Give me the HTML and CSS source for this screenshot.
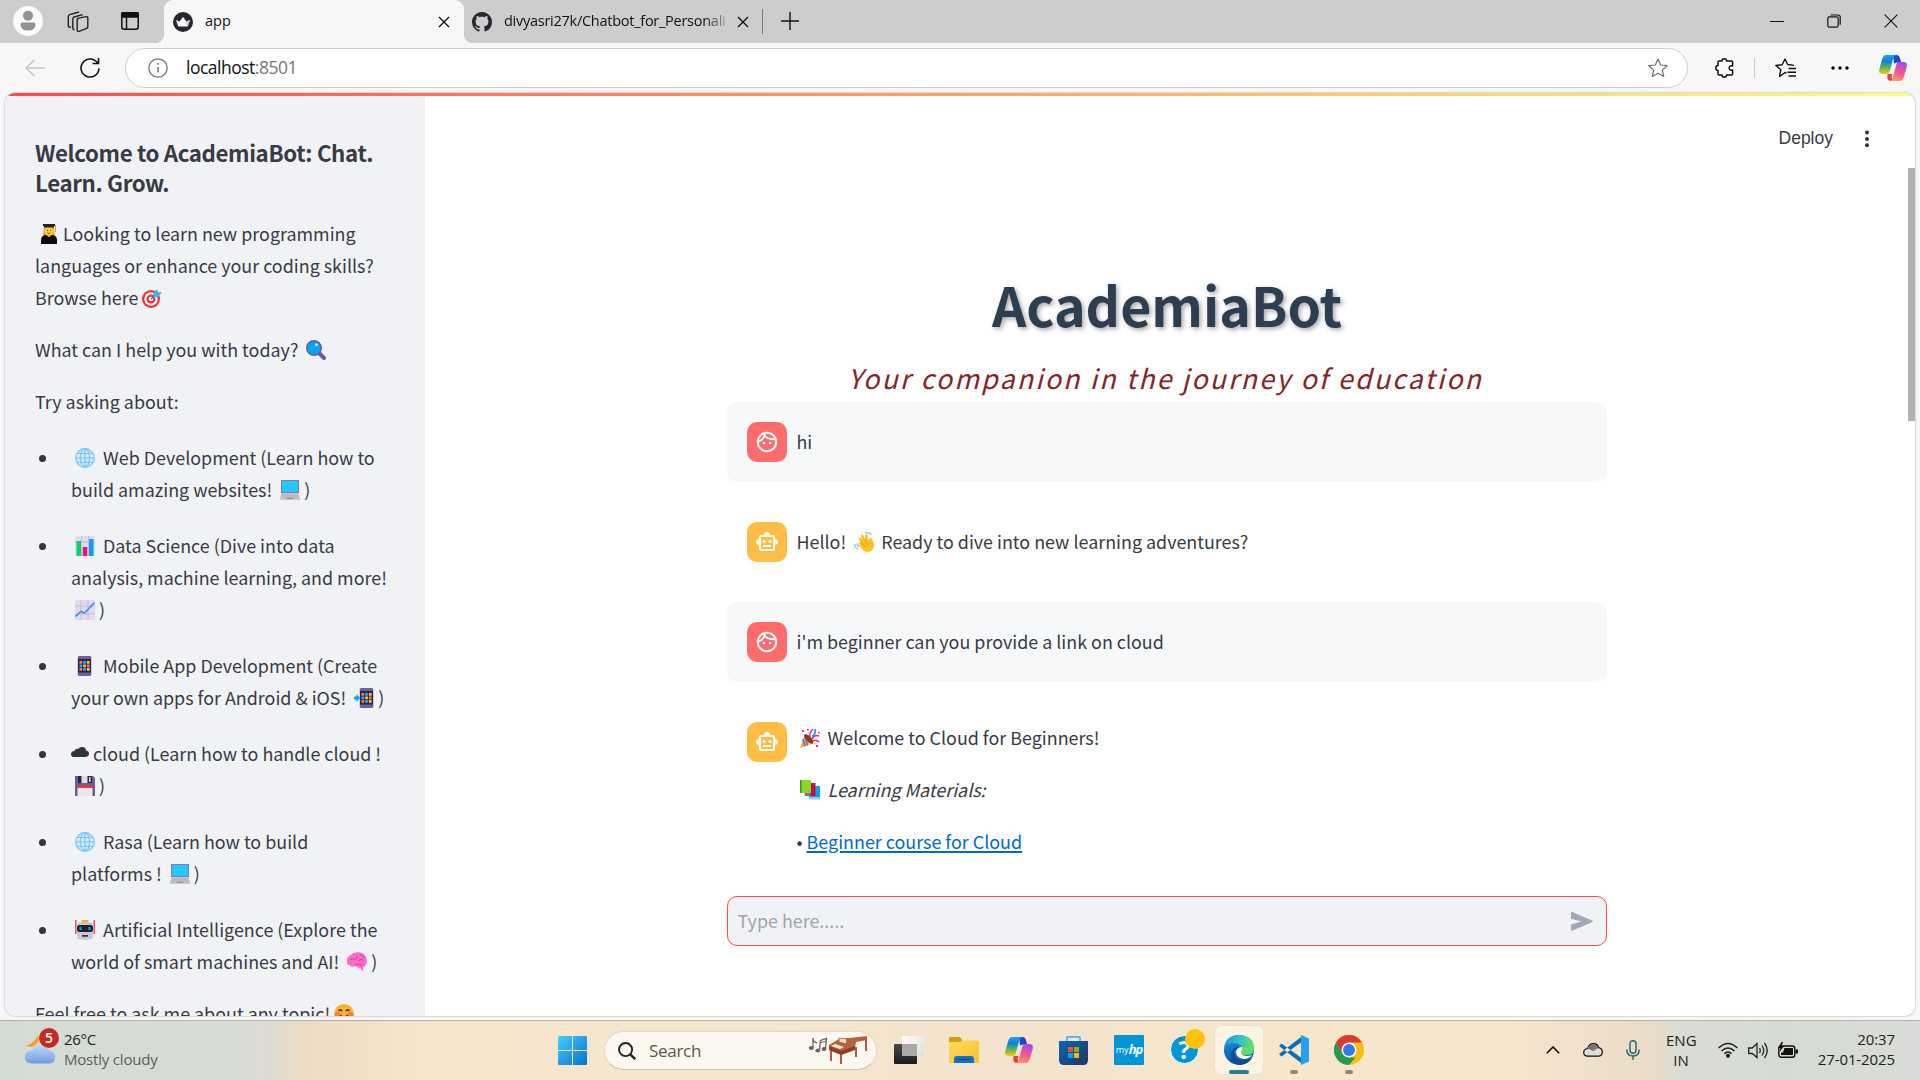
FILE: index.html
```html
<!DOCTYPE html>
<html lang="en">
<head>
<meta charset="utf-8">
<title>app</title>
<link rel="stylesheet" href="styles.css">
</head>
<body>
<svg class="defs" width="0" height="0">
  <defs>
    <linearGradient id="cpA" x1="0" y1="0" x2="0" y2="1"><stop offset="0" stop-color="#1ba5ee"/><stop offset=".35" stop-color="#0f7fd8"/><stop offset=".62" stop-color="#4fb35e"/><stop offset="1" stop-color="#fcc60e"/></linearGradient>
    <linearGradient id="cpB" x1="0.6" y1="0" x2="0.3" y2="1"><stop offset="0" stop-color="#a549ee"/><stop offset=".5" stop-color="#f0568f"/><stop offset="1" stop-color="#fb9d62"/></linearGradient>
    <linearGradient id="win" x1="0" y1="0" x2="1" y2="1"><stop offset="0" stop-color="#48cdfb"/><stop offset="1" stop-color="#0670d0"/></linearGradient>
    <linearGradient id="fold" x1="0" y1="0" x2="1" y2="1"><stop offset="0" stop-color="#ffda5c"/><stop offset="1" stop-color="#fdbf2d"/></linearGradient>
    <linearGradient id="store" x1="0" y1="0" x2="1" y2="1"><stop offset="0" stop-color="#0667b5"/><stop offset="1" stop-color="#24355f"/></linearGradient>
    <linearGradient id="edgeT" x1="0" y1=".4" x2="1" y2=".5"><stop offset="0" stop-color="#1a96d8"/><stop offset=".5" stop-color="#31c2cf"/><stop offset="1" stop-color="#67e34f"/></linearGradient>
    <linearGradient id="edgeB" x1="0" y1="0" x2="0" y2="1"><stop offset="0" stop-color="#1791dc"/><stop offset="1" stop-color="#0c59a4"/></linearGradient>
    <linearGradient id="cloudG" x1="0" y1="0" x2="0" y2="1"><stop offset="0" stop-color="#c4dcfb"/><stop offset="1" stop-color="#6f9be6"/></linearGradient>
    <linearGradient id="tvD" x1="0" y1="0" x2="0" y2="1"><stop offset="0" stop-color="#4a4a4a"/><stop offset="1" stop-color="#1a1a1a"/></linearGradient>
    <linearGradient id="tvL" x1="0" y1="0" x2="1" y2="1"><stop offset="0" stop-color="#fff"/><stop offset="1" stop-color="#dcdcdc"/></linearGradient>
  </defs>
  <symbol id="copilot" viewBox="0 0 28 26">
    <path d="M14 0h3.500q2.500 0 3.400 3l1.300 4.500h-4l-3.200 1z" fill="#1c48cc"/>
    <path d="M8.500 19h5l-1 3q1 4 3.500 4h-4q-3 0-3.700-3z" fill="#e5403a"/>
    <path d="M7.500 0H17q-2 .5-2.900 4L10.500 17q-.8 2-2.800 2H3.500Q-.7 19 .3 14L3.200 4Q4.300 0 7.500 0z" fill="url(#cpA)"/>
    <path d="M20.500 26H11q2-.5 2.900-4L17.500 9q.8-2 2.800-2h4.200q4.200 0 3.200 5l-2.900 10q-1.100 4-4.300 4z" fill="url(#cpB)"/>
  </symbol>
  <symbol id="globe" viewBox="0 0 20 20"><circle cx="10" cy="10" r="9.500" fill="#d3eaff"/><g fill="none" stroke="#79c4fb" stroke-width="1.200"><circle cx="10" cy="10" r="9.300"/><ellipse cx="10" cy="10" rx="4.600" ry="9.300"/><path d="M10 .7v18.600M.7 10h18.600M2.200 5.500h15.600M2.200 14.500h15.600"/></g></symbol>
  <symbol id="laptop" viewBox="0 0 20 20"><path d="M1 0h18v13H1z" fill="#7f7ab6"/><path d="M2 1h16v11H2z" fill="#26c6ff"/><path d="M1.500 13h17l1.500 5v2H0v-2z" fill="#c9c9ca"/><path d="M2 15h16M1.500 17h17" stroke="#aaa" stroke-width=".8"/><path d="M6.500 17.800h7v1h-7z" fill="#888"/></symbol>
  <symbol id="apps" viewBox="0 0 14 20"><rect width="14" height="20" rx="1.800" fill="#6d5ea0"/><path d="M.5 3h13v13.500H.5z" fill="#35204c"/><path d="M2 5h2.700v2.700H2zM9.400 8.500h2.700v2.700H9.400zM2 12h2.700v2.700H2z" fill="#ff822d"/><path d="M5.700 5h2.700v2.700H5.700zM2 8.500h2.700v2.700H2zM5.700 12h2.700v2.700H5.700z" fill="#1aaef5"/><path d="M9.400 5h2.700v2.700H9.400zM5.700 8.500h2.700v2.700H5.700zM9.400 12h2.700v2.700H9.400z" fill="#fcc93a"/></symbol>
  <symbol id="face-user" viewBox="0 0 24 24"><circle cx="12" cy="12" r="9.300" fill="none" stroke="#fff" stroke-width="2"/><path d="M3.200 11.800C6.200 10.700 8.600 8.600 9.700 5.200M8.700 3.800c1.900 3.800 5.600 6.100 12 5.200" fill="none" stroke="#fff" stroke-width="1.900"/><circle cx="9" cy="13" r="1.300" fill="#fff"/><circle cx="15" cy="13" r="1.300" fill="#fff"/></symbol>
  <symbol id="bot" viewBox="0 0 24 24"><path fill="#fff" d="M20 9V7c0-1.100-.9-2-2-2h-3c0-1.660-1.340-3-3-3S9 3.340 9 5H6c-1.100 0-2 .9-2 2v2c-1.660 0-3 1.340-3 3s1.340 3 3 3v4c0 1.100.9 2 2 2h12c1.100 0 2-.9 2-2v-4c1.660 0 3-1.340 3-3s-1.340-3-3-3zm-2 10H6V7h12v12zm-9-6a1.500 1.500 0 1 1 0-3 1.500 1.500 0 0 1 0 3zm7.500-1.500a1.500 1.500 0 1 1-3 0 1.500 1.500 0 0 1 3 0zM8 15h8v2H8v-2z"/></symbol>
</svg>

<header class="tabstrip">
  <svg class="profile" viewBox="0 0 30 30"><circle cx="15" cy="15" r="15" fill="#fbfbfb"/><circle cx="15" cy="9.800" r="5" fill="#919191"/><path d="M7.500 18.500q0-2 2-2h11q2 0 2 2 0 6-7.500 6t-7.500-6z" fill="#919191"/></svg>
  <svg class="workspaces" viewBox="0 0 22 22" fill="none" stroke="#222" stroke-width="1.400"><path d="M9.800 7.600l9-2q2-.2 2 1.600v8.600q0 1.200-1.200 1.600l-7.600 2.900q-1.800.5-1.800-1.300V9.100q0-1.200 1-1.400z"/><path d="M7.500 18.500q-1.700.5-1.700-1.300V8q0-1.500 1.300-2l8.600-2.400"/><path d="M4 16q-2.700.6-2.700-1.200V5.700q0-1.500 1.300-2L12 1"/></svg>
  <svg class="tabmenu" viewBox="0 0 18 18" fill="none" stroke="#111" stroke-width="1.500"><rect x=".8" y=".8" width="16.400" height="16.400" rx="2.500"/><path d="M1 1h16v4H1z" fill="#111"/><path d="M5.500 5v12"/></svg>
  <div class="tab tab-active">
    <svg class="favicon" viewBox="0 0 20 20"><circle cx="10" cy="10" r="10" fill="#262730"/><path d="M3 8l3.500 1.500L10 5l3.500 4.500L17 8l-2.300 6.500H5.300z" fill="#fff"/><path d="M10 5l3.500 4.500L17 8l-2.300 6.500z" fill="#ccc"/></svg>
    <span class="tab-title">app</span>
    <svg class="x" viewBox="0 0 12 12"><path d="M1 1l10 10M11 1L1 11" stroke="#111" stroke-width="1.400"/></svg>
  </div>
  <div class="tab tab-idle">
    <svg class="favicon" viewBox="0 0 16 16"><path fill="#24292f" d="M8 0C3.580 0 0 3.580 0 8c0 3.540 2.290 6.530 5.470 7.590.4.070.55-.17.55-.38 0-.19-.010-.82-.010-1.490-2.010.37-2.530-.49-2.690-.94-.09-.23-.48-.94-.82-1.130-.28-.15-.68-.52-.010-.53.63-.010 1.080.58 1.230.82.72 1.210 1.870.87 2.330.66.070-.52.28-.87.51-1.070-1.780-.2-3.640-.89-3.640-3.950 0-.87.31-1.590.82-2.150-.08-.2-.36-1.020.08-2.120 0 0 .67-.21 2.200.82.64-.18 1.320-.27 2-.27s1.360.09 2 .27c1.530-1.040 2.200-.82 2.200-.82.44 1.100.16 1.920.08 2.120.51.56.82 1.270.82 2.150 0 3.070-1.870 3.750-3.650 3.950.29.25.54.73.54 1.480 0 1.070-.010 1.930-.010 2.200 0 .21.15.46.55.38A8.010 8.010 0 0 0 16 8c0-4.420-3.580-8-8-8z"/></svg>
    <span class="tab-title fade">divyasri27k/Chatbot_for_Personali</span>
    <svg class="x" viewBox="0 0 12 12"><path d="M1 1l10 10M11 1L1 11" stroke="#111" stroke-width="1.400"/></svg>
  </div>
  <i class="tab-sep"></i>
  <svg class="newtab" viewBox="0 0 18 18"><path d="M9 0v18M0 9h18" stroke="#111" stroke-width="1.400"/></svg>
  <div class="wincontrols">
    <svg viewBox="0 0 14 14"><path d="M0 7.500h14" stroke="#111"/></svg>
    <svg viewBox="0 0 14 14" fill="none" stroke="#111" stroke-width="1.200"><rect x=".8" y="2.800" width="10.400" height="10.400" rx="1.800"/><path d="M3.500 1h7.500q2.200 0 2.200 2.200v7.500"/></svg>
    <svg viewBox="0 0 14 14"><path d="M.7.7l12.600 12.600M13.300.7L.7 13.300" stroke="#111" stroke-width="1.100"/></svg>
  </div>
</header>

<div class="toolbar">
  <svg class="back" viewBox="0 0 20 18" fill="none" stroke="#c6c6c6" stroke-width="1.500"><path d="M20 9H1M9.500 1L1 9l8.500 8"/></svg>
  <svg class="reload" viewBox="0 0 20 20" fill="none" stroke="#111" stroke-width="1.600"><path d="M17.500 5A9 9 0 1 0 19 10.500M18.500 0v5.500H12.500"/></svg>
  <div class="urlbar">
    <svg class="info" viewBox="0 0 20 20" fill="none" stroke="#757575" stroke-width="1.300"><circle cx="10" cy="10" r="9.200"/><path d="M10 9v5.500M10 5v1.800" stroke-width="1.500"/></svg>
    <span class="url">localhost<span class="port">:8501</span></span>
    <svg class="star" viewBox="0 0 20 20" fill="none" stroke="#707070" stroke-width="1.200" stroke-linejoin="round"><path d="M10 1l2.700 6 6.500.7-4.900 4.400 1.400 6.400L10 15.200l-5.700 3.300 1.400-6.400L.8 7.700 7.300 7z"/></svg>
  </div>
  <svg class="puzzle" viewBox="0 0 19 20" fill="none" stroke="#111" stroke-width="1.500" stroke-linejoin="round"><path d="M7 3q0-2.200 2.300-2.200T11.600 3h5q1 0 1 1v4q-3.400-.7-3.400 2t3.400 2v4q0 1-1 1h-5q0 2.200-2.300 2.200T7 17H4q-1 0-1-1v-3.600Q.8 12.300.8 10T3 7.600V4q0-1 1-1z"/></svg>
  <i class="bar-sep"></i>
  <svg class="favs" viewBox="0 0 21 20" fill="none" stroke="#111" stroke-width="1.400" stroke-linejoin="round"><path d="M11.500 15l-1.500-.5-5.500 4 1.300-6.800L.8 7.500l6.300-.8L10 1l2.700 5.500 6.300.9M13.500 10.500H21M12.500 14.300H21M13.500 18H21"/></svg>
  <svg class="more" viewBox="0 0 18 4"><circle cx="2" cy="2" r="1.700"/><circle cx="9" cy="2" r="1.700"/><circle cx="16" cy="2" r="1.700"/></svg>
  <svg class="cp"><use href="#copilot"/></svg>
</div>

<main class="page">
  <div class="decoration"></div>
  <div class="app">
    <aside class="sidebar">
      <h3>Welcome to AcademiaBot: Chat.<br>Learn. Grow.</h3>
      <p><svg class="emoji" viewBox="0 0 20 20"><path d="M5 3h10l.7 9H4.300z" fill="#e59b1c"/><circle cx="10" cy="7" r="4.500" fill="#ffc93c"/><path d="M2 20v-4q0-4.500 5-5l3 2 3-2q5 .5 5 5v4z" fill="#0b0b0b"/><path d="M4 0h12v2H4zM5 2h10v1.500H5z" fill="#222"/><path d="M8 6.500h1M11 6.500h1" stroke="#6b4410" stroke-width="1.200"/><path d="M8.500 9q1.500 1 3 0" stroke="#b5432b" fill="none"/><path d="M16.500 1v7" stroke="#e0a32f"/></svg>Looking to learn new programming<br>languages or enhance your coding skills?<br>Browse here<svg class="emoji" viewBox="0 0 20 20"><circle cx="9" cy="11" r="9" fill="#f8312f"/><circle cx="9" cy="11" r="6.700" fill="#fff"/><circle cx="9" cy="11" r="4.500" fill="#f8312f"/><circle cx="9" cy="11" r="2.300" fill="#fff"/><path d="M9 11l6-6" stroke="#187fc4" stroke-width="1.300"/><path d="M11 6l4-5 1 3 4 .5-4 4.500-4 .5z" fill="#38b8f8"/></svg></p>
      <p>What can I help you with today? <svg class="emoji" viewBox="0 0 20 20"><path d="M13 13l5 5" stroke="#6c5b9e" stroke-width="4" stroke-linecap="round"/><circle cx="8" cy="8" r="7.300" fill="#00a6ed" stroke="#6c5b9e" stroke-width="1.400"/><circle cx="10.500" cy="4.700" r="1.300" fill="#fff"/></svg></p>
      <p>Try asking about:</p>
      <ul>
        <li><span><svg class="emoji"><use href="#globe"/></svg> Web Development (Learn how to<br>build amazing websites! <svg class="emoji"><use href="#laptop"/></svg>)</span></li>
        <li><span><svg class="emoji" viewBox="0 0 20 20"><rect width="20" height="20" rx="2" fill="#e5d9ef"/><path d="M6.500 0v20M13.500 0v20M0 6h20M0 13h20" stroke="#c9bbd4"/><path d="M1.500 5H6v15H1.500z" fill="#00d26a"/><path d="M7.800 11h4.500v9H7.800z" fill="#f70a8d"/><path d="M14 3h4.500v17H14z" fill="#00a6ed"/></svg> Data Science (Dive into data<br>analysis, machine learning, and more!<br><svg class="emoji" viewBox="0 0 20 20"><rect width="20" height="20" rx="2" fill="#e5d9ef"/><path d="M6 0v20M13 0v20M0 6h20M0 14h20" stroke="#c9bbd4"/><path d="M.5 16.500L6 11.500l3.500 1.500L19.500 2.500" fill="none" stroke="#2f9cf0" stroke-width="1.600"/></svg>)</span></li>
        <li><span><svg class="emoji" viewBox="0 0 20 20"><use href="#apps" x="2.500" width="14" height="20"/></svg> Mobile App Development (Create<br>your own apps for Android &amp; iOS! <svg class="emoji" viewBox="0 0 20 20"><use href="#apps" x="5.500" width="14" height="20"/><path d="M0 8.500h2.500V6L6 10l-3.500 4v-2.500H0z" fill="#00a6ed"/></svg>)</span></li>
        <li><span><svg class="cloudglyph" viewBox="0 0 18 10"><path d="M3.500 10Q0 10 0 7.200T3.500 4Q4.500 1.300 7 2q1.500-2 4-2 4 0 4 3.500 3 .5 3 3.300T14.500 10z" fill="#31333f"/></svg>cloud (Learn how to handle cloud !<br><svg class="emoji" viewBox="0 0 20 20"><path d="M0 0h18l2 2v18H0z" fill="#6b5b9b"/><path d="M3 0h14v7H3z" fill="#32204c"/><path d="M6.500 0h6v7h-6z" fill="#ddd"/><path d="M14 1h1.500v5H14z" fill="#ddd"/><path d="M2.500 11h15v9h-15z" fill="#e8e8e8"/><path d="M2.500 9.500h15V12h-15z" fill="#f8312f"/></svg>)</span></li>
        <li><span><svg class="emoji"><use href="#globe"/></svg> Rasa (Learn how to build<br>platforms ! <svg class="emoji"><use href="#laptop"/></svg>)</span></li>
        <li><span><svg class="emoji" viewBox="0 0 20 20"><path d="M.8 0v14M19.200 0v14" stroke="#f0504e" stroke-width="1.500"/><path d="M6.500 0h7v4h-7z" fill="#fdb02e"/><path d="M3 2.500h14l1.500 5L17.500 19q-7.500 1.500-15 0L1.500 7.500z" fill="#cdc4d6"/><rect x="2" y="5" width="16" height="7" rx="2.500" fill="#20222b"/><path d="M5.500 7v3M14.500 7v3" stroke="#00a6ed" stroke-width="2.200"/><path d="M7 15h6v1.800H7z" fill="#333"/></svg> Artificial Intelligence (Explore the<br>world of smart machines and AI! <svg class="emoji" viewBox="0 0 20 20"><path d="M0 10Q-1 6 3 3.500 7-.5 12 .3q5 .7 7 5 2 4-.5 8.200L16 15.500V20l-2.500-4q-3 .5-4.500-2-5 2-6.500-1Q0 13 0 10z" fill="#ff6dc6"/><path d="M3 8q3-3 5 0M9 3.500q2 2 0 4M11 9q3-3 6-.5M8 13q4-2 7 1M13 3q3 0 4 3" fill="none" stroke="#e8359f"/></svg>)</span></li>
      </ul>
      <p>Feel free to ask me about any topic!<svg class="emoji" viewBox="0 0 20 20"><circle cx="10" cy="10" r="10" fill="#ffb02e"/><path d="M4.500 7q1.700-2.500 3.500 0M12 7q1.700-2.500 3.500 0M6 11q4 4 8 0" fill="none" stroke="#402a32" stroke-width="1.400"/><circle cx="3.500" cy="10.500" r="2.500" fill="#ff7a3c"/><circle cx="16.500" cy="10.500" r="2.500" fill="#ff7a3c"/></svg></p>
    </aside>
    <section class="main">
      <div class="apphead">
        <span>Deploy</span>
        <svg class="kebab" viewBox="0 0 4 18"><circle cx="2" cy="2.500" r="2"/><circle cx="2" cy="8.900" r="2"/><circle cx="2" cy="15.200" r="2"/></svg>
      </div>
      <div class="column">
        <h1>AcademiaBot</h1>
        <div class="subtitle">Your companion in the journey of education</div>
        <div class="msg user"><div class="avatar"><svg><use href="#face-user"/></svg></div><div class="body"><p>hi</p></div></div>
        <div class="msg"><div class="avatar"><svg><use href="#bot"/></svg></div><div class="body"><p>Hello! <svg class="emoji" viewBox="0 0 20 20"><path d="M6 9L4.500 6.500Q6 5 7 6.500L8 8 7 3.500q1.200-1.500 2.300 0L11 7l.5-4.500q1.500-1 2 .5L14 8l2-2q2-.5 2 1l2 5q0 7-6 8-4 0-6-3l-3.500-5Q5 10 6 11z" fill="#ffc020"/><path d="M8 11l3 4M10.500 8l3 5" stroke="#e59a16" fill="none"/><path d="M1 12q-1 4 3 5M3 11.500q-.5 3 2.500 3M11 1q2-1.500 4 1M15 .5q2 .5 2 2.500" fill="none" stroke="#6aa6ee"/></svg> Ready to dive into new learning adventures?</p></div></div>
        <div class="msg user"><div class="avatar"><svg><use href="#face-user"/></svg></div><div class="body"><p>i'm beginner can you provide a link on cloud</p></div></div>
        <div class="msg long"><div class="avatar"><svg><use href="#bot"/></svg></div><div class="body">
          <p><svg class="emoji" viewBox="0 0 20 20"><path d="M4.500 6.500l8 9L0 20z" fill="#fcb02d"/><path d="M4.500 6.500l3 11M3 11l2 7.300" stroke="#5b6cd8" stroke-width="1.500"/><ellipse cx="9" cy="11" rx="2.500" ry="6" transform="rotate(-42 9 11)" fill="#7b3f1c"/><path d="M10 9q-1-4 3-8M12 11q2-5 7-3M13 13q3-2 6 1" fill="none" stroke="#f0259a" stroke-width="1.500"/><path d="M12 8q4-1 3-7" fill="none" stroke="#00a6ed" stroke-width="1.700"/><path d="M2 2h2v2H2zM16 17h2v2h-2zM7 1h1.500v1.500H7zM18 4h1.500v1.500H18z" fill="#f0259a"/><path d="M8 4h1.500v1.500H8zM14 15h1.500v1.500H14z" fill="#fcc23c"/></svg> Welcome to Cloud for Beginners!</p>
          <p><svg class="emoji" viewBox="0 0 20 20"><path d="M9 6h11v13H9z" fill="#00a6ed"/><path d="M9 17h11v2.500H9z" fill="#9bc8e8"/><path d="M5 3h10.500v13H5z" fill="#ca0b4a"/><path d="M4.500 13h6v3h-6z" fill="#9a6b82"/><path d="M0 0h11v13H0z" fill="#86d72f"/><path d="M0 0h1.500v13H0z" fill="#44911b"/></svg> <em>Learning Materials:</em></p>
          <p>• <a>Beginner course for Cloud</a></p>
        </div></div>
        <div class="chatinput"><span>Type here.....</span><svg viewBox="0 0 22 19"><path d="M1.200.1L21.500 8.700q.9.600 0 1.300L1.200 18.800Q0 19 0 18v-5.600l10.500-2.900L0 6.800V1Q.1 0 1.200.1z" fill="#a3a8b8"/></svg></div>
      </div>
      <div class="scrollthumb"></div>
    </section>
  </div>
</main>

<footer class="taskbar">
  <div class="weather">
    <svg viewBox="0 0 34 37"><path d="M13 8q3 8-6 12l-7-1q9-2 13-11z" fill="#f6a01f"/><path d="M7 36.500Q0 36.500 0 30t7-6.500Q10 17.500 16 17.500t8 6q6 .5 6 6.500t-6 6.500z" fill="url(#cloudG)"/><circle cx="24" cy="11" r="10" fill="#c42b1c"/></svg>
    <b class="badge">5</b>
    <div class="forecast"><div class="temp">26°C</div><div class="cond">Mostly cloudy</div></div>
  </div>
  <svg class="start" viewBox="0 0 29 29"><path d="M0 1q0-1 1-1h13v14H0zM15 0h13q1 0 1 1v13H15zM0 15h14v14H1q-1 0-1-1zM15 15h14v13q0 1-1 1H15z" fill="url(#win)"/></svg>
  <div class="search">
    <svg class="mag" viewBox="0 0 19 19" fill="none" stroke="#222" stroke-width="2"><circle cx="8" cy="8" r="6.900"/><path d="M13 13l5.200 5.200" stroke-width="2.500"/></svg>
    <span>Search</span>
    <svg class="piano" viewBox="0 0 58 29"><g fill="#666" stroke="#666"><path d="M4 12V2q0 4 4 5M10.500 13.500l1-9 6-2-1 10" fill="none" stroke-width="1.300"/><path d="M11 7l6-2" fill="none"/><ellipse cx="2.300" cy="12" rx="2" ry="1.500"/><ellipse cx="8.800" cy="14.500" rx="2" ry="1.500"/><ellipse cx="15" cy="13" rx="2" ry="1.500"/></g><path d="M22 12v13M32 17v11M47 11v10M57 3v12" stroke="#9b4e36" stroke-width="1.800"/><path d="M20 9L30 3l10-1 18-2v4l-11 2-1 6-14 5.500-12-4z" fill="#b86142"/><path d="M20 10l12 5 14-5v4l-14 5-12-5z" fill="#8b3e2a"/><path d="M22 10l4-2 9 3-4 2z" fill="#f7ead8"/><path d="M30 2l8 1-1 5-7-2z" fill="#f6e2b8" stroke="#875129" stroke-width=".7"/></svg>
  </div>
  <svg class="taskview" viewBox="0 0 30 28"><rect y="8" width="23" height="20" rx="1" fill="url(#tvD)"/><rect x="8" width="22" height="20" rx="1" fill="url(#tvL)" opacity=".95"/><path d="M8 8h15v12H8z" fill="#a9a9a9"/></svg>
  <svg class="explorer" viewBox="0 0 30 26"><path d="M0 1q0-1 1-1h9q1.500 0 2.500 2l1 2L11 6H0z" fill="#dd9c09"/><path d="M0 5h11l2-1.500h16q1 0 1 1V25q0 1-1 1H1q-1 0-1-1z" fill="url(#fold)"/><path d="M5 26v-4q0-3 3-3h14q3 0 3 3v4z" fill="#0c73cb"/><path d="M8.500 22.500h13" stroke="#084c8d" stroke-width="1.200"/></svg>
  <svg class="copilot"><use href="#copilot"/></svg>
  <svg class="store" viewBox="0 0 29 29"><path d="M8 6V2q0-1.200 1-1.200h11q1 0 1 1.200v4" fill="none" stroke="#30bdf3" stroke-width="1.700"/><path d="M0 5h29v19q0 5-5 5H5q-5 0-5-5z" fill="url(#store)"/><path d="M9 11h5v5H9z" fill="#f25022"/><path d="M15 11h5v5h-5z" fill="#7fba00"/><path d="M9 17h5v5H9z" fill="#00a4ef"/><path d="M15 17h5v5h-5z" fill="#ffb900"/></svg>
  <div class="myhp"><span>my</span><b>hp</b></div>
  <div class="help">?<i></i></div>
  <div class="edge"><svg viewBox="0 0 30 30"><circle cx="15" cy="15" r="15" fill="url(#edgeB)"/><path d="M0 14Q1 0 15 0q15 1 15 13 0 7-7 7-6 0-6-3 2-2 1-4-1-5-9-5-6 0-9 6z" fill="url(#edgeT)"/><path d="M10 16q0 9 10 9 5 0 8-2-4 7-13 7-8-1-8-9 0-7 6-9 4 0 5 2-7-1-8 2z" fill="#104a96"/><path d="M18 12q2 3-1 5 1 4 6 4 3 0 5-1-3 4-8 4-8-1-8-7 1-5 6-5z" fill="#fcf3e4"/><path d="M30 13q0 7-7 7-6 0-6-3 2-2 1-4z" fill="#5edc68"/></svg><i></i></div>
  <div class="code"><svg viewBox="0 0 30 30"><path d="M0 11l2.500-2.500L24 24v5.500zM0 19l2.500 2.500L24 6V.5z" fill="#0a6fb8"/><path d="M22 0l8 3.500v23L22 30z" fill="#26a0ee"/></svg><i></i></div>
  <div class="chrome"><svg viewBox="0 0 30 30"><circle cx="15" cy="15" r="15" fill="#fbbc12"/><path d="M2 7.500A15 15 0 0 1 28 7.500H15L8.500 19z" fill="#db3a2e"/><path d="M2 7.500L8.500 18.700 15 22.500h6.500L15 30A15 15 0 0 1 2 7.500z" fill="#249a4a"/><circle cx="15" cy="15" r="7.500" fill="#fff"/><circle cx="15" cy="15" r="6" fill="#3478ee"/></svg><i></i></div>
  <div class="tray">
    <svg class="chev" viewBox="0 0 14 8" fill="none" stroke="#111" stroke-width="1.600"><path d="M.8 7.300L7 1l6.200 6.300"/></svg>
    <svg class="onedrive" viewBox="0 0 20 14"><path d="M4.500 13.200Q.7 13 .7 9.500t4-4Q6 .7 10.500.7q4 0 5.300 4Q19.300 5.500 19.300 9t-3.500 4.200z" fill="#ddd" stroke="#111" stroke-width="1.200"/><path d="M4.700 5.500Q6.500 1.200 10.500 1.200T15.500 5L10 8z" fill="#777"/></svg>
    <svg class="mic" viewBox="0 0 14 20" fill="none" stroke="#2b6473" stroke-width="1.400"><rect x="4" y=".7" width="6" height="12.500" rx="3"/><path d="M.8 9.500q0 6.500 6.200 6.500t6.200-6.500M7 16v4"/></svg>
    <div class="lang">ENG<br>IN</div>
    <svg class="wifi" viewBox="0 0 20 16" fill="none" stroke="#222" stroke-width="1.500"><path d="M.6 6q9.400-9 18.800 0M3.500 9q6.500-6 13 0M6.300 11.800q3.700-3.300 7.400 0"/><circle cx="10" cy="13.800" r="1.300" fill="#222"/></svg>
    <svg class="vol" viewBox="0 0 20 17" fill="none" stroke="#222" stroke-width="1.300"><path d="M.7 6v5.500h3.500L9 15.500v-14L4.200 6zM11.500 6q1.500 2.500 0 5M14 3.500q3.500 5 0 10M16.500 1q5.500 7.500 0 15"/></svg>
    <svg class="bat" viewBox="0 0 20 16"><rect x=".8" y="4" width="16" height="11.200" rx="2.500" fill="none" stroke="#111" stroke-width="1.400"/><path d="M6.500 6H15v7H3v-2.500h2z" fill="#111"/><path d="M17.500 7.500h2.500v4h-2.500zM3.500 0L0 6h2.500L1.500 10 6 4H3.500L5 0z" fill="#111"/></svg>
    <div class="clock"><div>20:37</div><div>27-01-2025</div></div>
  </div>
</footer>
</body>
</html>
```
FILE: styles.css
```css
* { box-sizing: border-box; margin: 0; padding: 0; }
body {
  width: 1920px; height: 1080px; overflow: hidden;
  display: flex; flex-direction: column;
  background: #f7f7f7; color: #31333f;
  font-family: "Open Sans", sans-serif;
}
svg, i { display: block; flex: none; }
.defs { position: absolute; }

/* Browser tab strip */
.tabstrip { height: 43px; flex: none; display: flex; align-items: center; background: #cdcdcd; font-size: 14.5px; color: #111; }
.profile { width: 30px; height: 30px; margin: -2px 0 0 13px; }
.workspaces { width: 22px; height: 22px; margin-left: 24px; }
.tabmenu { width: 18px; height: 18px; margin: -1px 25px 0 32px; }
.tab { height: 43px; display: flex; align-items: center; }
.tab-active { width: 300px; padding-left: 9px; background: #f7f7f7; border-radius: 9px 9px 0 0; position: relative; }
.tab-active::before, .tab-active::after { content: ""; position: absolute; bottom: 0; width: 9px; height: 9px; }
.tab-active::before { left: -9px; background: radial-gradient(circle at 0 0, #cdcdcd 9px, #f7f7f7 9.5px); }
.tab-active::after { right: -9px; background: radial-gradient(circle at 100% 0, #cdcdcd 9px, #f7f7f7 9.5px); }
.tab-idle { padding-left: 8px; }
.favicon { width: 20px; height: 20px; }
.tab-title { margin: -2px 0 0 12px; white-space: nowrap; }
.tab-active .tab-title { width: 233px; }
.tab-idle .tab-title { width: 222px; letter-spacing: -.26px; overflow: hidden; margin-right: 11px; }
.fade { -webkit-mask-image: linear-gradient(90deg, #000 200px, transparent 228px); mask-image: linear-gradient(90deg, #000 200px, transparent 228px); }
.x { width: 12px; height: 12px; }
.tab-sep { width: 1px; height: 25px; background: #777; margin-left: 13px; }
.newtab { width: 18px; height: 18px; margin: -1px 0 0 18px; }
.wincontrols { margin: -1px 22px 0 auto; display: flex; gap: 43px; }
.wincontrols svg { width: 14px; height: 14px; }

/* Address bar row */
.toolbar { height: 50px; flex: none; display: flex; align-items: center; }
.back { width: 20px; height: 18px; margin-left: 25px; }
.reload { width: 20px; height: 20px; margin-left: 35px; }
.urlbar { width: 1563px; height: 40px; margin-left: 25px; display: flex; align-items: center; background: #fff; border: 1px solid #d0d0d0; border-radius: 20px; }
.info { width: 20px; height: 20px; margin-left: 22px; }
.url { margin: -2px 0 0 18px; font-size: 17.5px; letter-spacing: -.5px; color: #111; }
.port { color: #757575; }
.star { width: 20px; height: 20px; margin: 0 19px 0 auto; }
.puzzle { width: 19px; height: 20px; margin-left: 27px; }
.bar-sep { width: 1px; height: 20px; background: #c8c8c8; margin-left: 20px; }
.favs { width: 21px; height: 20px; margin-left: 20px; }
.more { width: 18px; height: 4px; margin-left: 35px; }
.cp { width: 28px; height: 26px; margin-left: 30px; }

/* Page surface */
.page { width: 1910px; height: 923px; margin-left: 5px; flex: none; overflow: hidden; background: #fff; border-radius: 10px; box-shadow: 0 0 2px rgba(0,0,0,.4); display: flex; flex-direction: column; font-family: "Noto Sans CJK JP", sans-serif; font-size: 17.900px; line-height: 32px; color: #383a46; }
.decoration { height: 3px; flex: none; background: linear-gradient(90deg, #ff4b4b, #fffd80); }
.app { height: 920px; display: flex; }

.sidebar { width: 420px; flex: none; height: 920px; overflow: hidden; padding: 41px 0 0 30px; background: #f0f2f6; white-space: nowrap; }
.sidebar h3 { font-size: 22.300px; line-height: 30px; font-weight: 600; letter-spacing: -.38px; margin-bottom: 20px; }
.sidebar p { margin-bottom: 20px; }
.sidebar ul { list-style: none; margin: 24px 0 20px; display: flex; flex-direction: column; gap: 24px; }
.sidebar li { display: grid; grid-template-columns: 36px 1fr; }
.sidebar li::before { content: ""; width: 7px; height: 7px; margin: 14px 0 0 4px; border-radius: 50%; background: #31333f; }
.emoji { display: inline-block; width: 20px; height: 20px; margin: 0 4px; vertical-align: -3px; }
.cloudglyph { display: inline-block; width: 18px; height: 10px; margin-right: 4px; vertical-align: 4px; }

.main { flex: 1; display: grid; grid-template-columns: 302px 880px 1fr; grid-template-rows: 72px 1fr; }
.apphead { grid-column: 1 / -1; display: flex; align-items: center; padding: 13px 46px 0 0; font: 17.500px "Liberation Sans", sans-serif; }
.apphead span { margin-left: auto; }
.kebab { width: 4px; height: 18px; margin-left: 32px; fill: #31333f; }
.column { grid-column: 2; padding-top: 89px; }
h1 { font-size: 53.600px; line-height: 94px; text-align: center; font-weight: 700; color: #2c3e50; text-shadow: 2px 2px 5px rgba(0,0,0,.35); }
.subtitle { height: 51px; line-height: 53px; text-align: center; font-size: 26.800px; font-style: italic; font-weight: 400; letter-spacing: 2.150px; color: #842329; white-space: nowrap; margin-left: -3px; }
.msg { display: flex; gap: 9.500px; height: 80px; padding: 20px; margin-bottom: 20px; border-radius: 10px; }
.msg.user { background: #f7f8fa; }
.msg.long { height: 194px; margin-bottom: 0; }
.avatar { width: 40px; height: 40px; flex: none; border-radius: 10px; background: #ffbd45; display: grid; place-items: center; }
.user .avatar { background: #ff6c6c; }
.avatar svg { width: 24px; height: 24px; }
.body { padding-top: 3px; white-space: nowrap; }
.body .emoji { margin: 0 3.500px; }
.long .body { padding-top: 0; margin-top: -1px; }
.body p { margin-bottom: 20px; }
.body a { color: #0068c9; text-decoration: underline; text-underline-offset: 2px; text-decoration-thickness: 2px; }
.chatinput { height: 50px; display: flex; align-items: center; justify-content: space-between; padding: 0 13px 0 9.500px; background: #f0f2f6; border: 1px solid #ff4b4b; border-radius: 10px; color: #a3a4aa; }
.chatinput span { margin-top: -2px; }
.chatinput svg { width: 22px; height: 19px; }
.scrollthumb { width: 7px; height: 253px; margin-left: auto; background: #b0b0b5; }

/* Taskbar */
.taskbar { height: 60px; flex: none; margin-top: 4px; display: flex; align-items: flex-start; border-top: 1px solid #b8b0a3; color: #222; background: linear-gradient(90deg, #d3dcd4 0, #d8dcd6 240px, #dedbd0 275px, #ecdcc3 305px, #f4e5cb 430px, #f5e6cf 800px, #f3e2cd 1000px, #f6e7cb 1250px, #f6e6cb 1500px, #f0e0cc 1580px, #ebdcc8 1645px, #d9dcd6 1685px, #d5dbd3 1780px, #dadbd8 1920px); }
.weather { width: 558px; flex: none; display: flex; padding: 6px 0 0 25px; font-size: 15px; line-height: 20px; position: relative; }
.weather svg { width: 34px; height: 37px; margin-right: 5px; }
.badge { position: absolute; left: 39px; top: 7px; width: 20px; text-align: center; color: #fff; font-size: 14px; font-weight: 600; }
.forecast { margin-top: 2px; }
.temp { letter-spacing: -.3px; }
.cond { letter-spacing: -.2px; color: #5a5f5c; }
.start { width: 29px; height: 29px; margin-top: 15px; }
.search { width: 273px; flex: none; height: 39px; margin: 10px 0 0 17px; padding: 0 9px 0 13px; display: flex; align-items: center; border-radius: 20px; background: #fdf8ef; border: 1px solid #e6d9c2; border-bottom-color: #cfc0a8; font-size: 17px; letter-spacing: -.3px; color: #5b5750; }
.mag { width: 18px; height: 18px; margin-right: 13px; }
.piano { width: 58px; height: 29px; margin-left: auto; }
.taskview { width: 30px; height: 28px; margin: 15px 0 0 17px; }
.explorer { width: 30px; height: 26px; margin: 16px 0 0 25px; }
.copilot { width: 28px; height: 26px; margin: 16px 0 0 26px; }
.store { width: 29px; height: 29px; margin: 15px 0 0 26px; }
.myhp { width: 30px; height: 30px; flex: none; margin: 14px 0 0 26px; display: flex; justify-content: center; background: #0096d6; color: #fff; font-size: 9px; line-height: 30px; border-radius: 1px; }
.myhp b { font-size: 13px; font-style: italic; line-height: 28px; letter-spacing: -1px; }
.help { position: relative; flex: none; width: 29px; height: 29px; margin: 14px 0 0 26px; border-radius: 50%; border: 1.500px solid #fff; background: #0096d6; color: #fff; font-size: 25px; font-weight: 700; line-height: 26px; text-align: center; }
.help i { position: absolute; left: 14px; top: -7.500px; width: 20px; height: 20px; border-radius: 50%; background: #fdc20c; }
.edge, .code, .chrome { width: 48px; height: 48px; flex: none; margin-top: 5px; display: flex; flex-direction: column; align-items: center; padding-top: 9px; border-radius: 5px; }
.edge { margin-left: 16px; background: #fcf3e4; box-shadow: 0 0 1px #cbbd9f; }
.code, .chrome { margin-left: 7px; }
.edge svg, .code svg, .chrome svg { width: 30px; height: 30px; }
.edge i, .code i, .chrome i { width: 8px; height: 4px; margin-top: 5px; border-radius: 2px; background: #8f8675; }
.edge i { width: 20px; background: #1f8096; }
.tray { margin-left: auto; height: 58px; display: flex; align-items: center; padding-right: 25px; font-size: 15px; line-height: 20px; }
.chev { width: 14px; height: 8px; margin-right: 23px; }
.onedrive { width: 20px; height: 14px; margin-right: 23px; }
.mic { width: 14px; height: 20px; margin-right: 26px; }
.lang { width: 30px; text-align: center; margin: -1px 22px 0 0; }
.wifi { width: 20px; height: 16px; margin-right: 10px; }
.vol { width: 20px; height: 17px; margin-right: 10px; }
.bat { width: 20px; height: 16px; margin-right: 20px; }
.clock { width: 77px; letter-spacing: -.1px; white-space: nowrap; margin-top: -3px; display: flex; flex-direction: column; align-items: flex-end; }
```
